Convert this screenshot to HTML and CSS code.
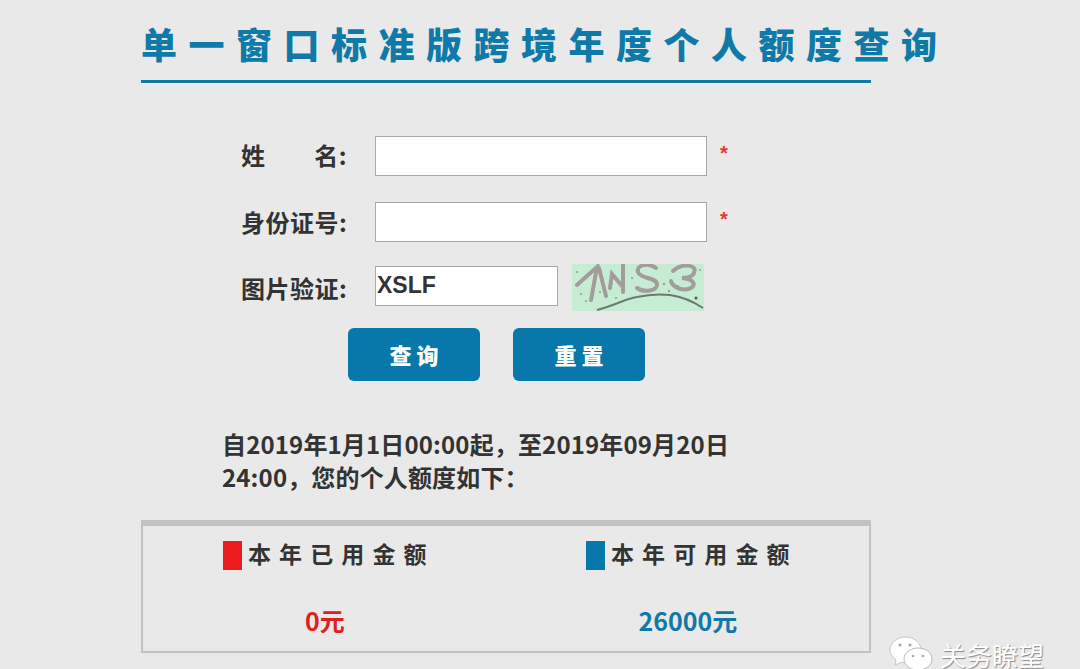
FILE: index.html
```html
<!DOCTYPE html>
<html lang="zh-CN">
<head>
  <meta charset="UTF-8">
  <title>单一窗口标准版跨境年度个人额度查询</title>
  <link rel="stylesheet" href="styles.css">
</head>
<body>
  <div class="page">
    <h1 class="title">单一窗口标准版跨境年度个人额度查询</h1>
    <div class="rule"></div>

    <form class="query-form">
      <div class="row">
        <label class="field-label spread">姓<span>名:</span></label>
        <input class="text-input" type="text">
        <span class="star">*</span>
      </div>
      <div class="row row-id">
        <label class="field-label">身份证号:</label>
        <input class="text-input" type="text">
        <span class="star">*</span>
      </div>
      <div class="row row-code">
        <label class="field-label code-label">图片验证:</label>
        <input class="text-input code-input" type="text" value="XSLF">
        <svg class="captcha" width="132" height="47" viewBox="0 0 132 47">
          <defs>
            <filter id="soft"><feGaussianBlur stdDeviation="0.6"/></filter>
          </defs>
          <rect width="132" height="47" fill="#c6ecd4"/>
          <g filter="url(#soft)">
            <g fill="none" stroke="#a29c9b" stroke-width="4" stroke-linecap="round">
              <path d="M5 21 L25 3 L19 36 M27 4 L34 32 M38 24 L40 10 L50 22 M51 1 L51 28"/>
              <path d="M84 4 C76 -2 64 1 66 8 C68 15 84 13 85 20 C86 27 72 29 65 24"/>
              <path d="M101 7 C110 -1 126 0 122 9 C120 14 112 14 110 14 C122 15 126 22 116 25 C108 27 100 22 99 17"/>
            </g>
            <path d="M25 46 C42 42 52 35 65 33 C78 30 88 30 98 31 C112 33 122 38 131 44" fill="none" stroke="#6c7a70" stroke-width="2"/>
            <g fill="#8aa596">
              <circle cx="9" cy="30" r="1.100"/><circle cx="14" cy="37" r="1.100"/><circle cx="28" cy="28" r="1"/>
              <circle cx="44" cy="34" r="1"/><circle cx="92" cy="20" r="1.200"/><circle cx="97" cy="27" r="1.200"/>
              <circle cx="106" cy="22" r="1"/><circle cx="5" cy="8" r="1"/><circle cx="128" cy="6" r="1"/>
              <circle cx="60" cy="14" r="1"/>
            </g>
            <circle cx="124" cy="34" r="1.500" fill="#4d5a52"/>
          </g>
        </svg>
      </div>
      <div class="actions">
        <button class="btn" type="button">查询</button>
        <button class="btn" type="reset">重置</button>
      </div>
    </form>

    <p class="notice">自2019年1月1日00:00起，至2019年09月20日<br>24:00，您的个人额度如下：</p>

    <div class="quota">
      <div class="quota-col">
        <div class="quota-head"><i class="mark mark-red"></i>本年已用金额</div>
        <div class="quota-value value-red">0元</div>
      </div>
      <div class="quota-col">
        <div class="quota-head"><i class="mark mark-blue"></i>本年可用金额</div>
        <div class="quota-value value-blue">26000元</div>
      </div>
    </div>
  </div>

  <!-- 水印 -->
  <div class="watermark">
    <svg width="44" height="32" viewBox="0 0 44 32">
      <path d="M16 0 C7 0 0 6 0 13 C0 17 3 20 6 23 L5 28 L12 25 C14 25.500 15 26 17 26 C24 26 31 20 31 13 C31 6 24 0 16 0 Z" fill="#fff" stroke="#bbb" stroke-width="0.8"/>
      <path d="M28 11 C20 11 14 16 14 22 C14 28 20 33 28 33 C36 33 42 28 42 22 C42 16 36 11 28 11 Z" fill="#fff" stroke="#aaa" stroke-width="0.8"/>
      <circle cx="10" cy="8" r="1.600" fill="#aaa"/>
      <circle cx="20" cy="8" r="1.600" fill="#aaa"/>
      <circle cx="23" cy="19" r="1.300" fill="#aaa"/>
      <circle cx="33" cy="19" r="1.300" fill="#aaa"/>
    </svg>
    <span class="watermark-name">关务瞭望</span>
  </div>
</body>
</html>
```

FILE: styles.css
```css
* {
  box-sizing: border-box;
}

html, body {
  height: 669px;
  overflow: hidden;
}

body {
  margin: 0;
  background: #e9e9e9;
  color: #333;
  font-family: "Liberation Sans", "Noto Sans CJK SC", sans-serif;
}

.page {
  width: 730px;
  margin-left: 141px;
}

.title {
  margin: 0;
  padding-top: 16px;
  height: 80px;
  font-family: "Noto Sans CJK SC", sans-serif;
  font-size: 36px;
  line-height: 54px;
  font-weight: 900;
  letter-spacing: 11.5px;
  white-space: nowrap;
  color: #0f79a8;
}

.rule {
  height: 3px;
  background: #0f79a8;
  box-shadow: 0 1px 0 #f6f6f0;
}

.query-form {
  padding: 53px 0 0 100px;
}

.row {
  display: flex;
  align-items: center;
  height: 40px;
  margin-bottom: 26px;
}

.row-id {
  margin-bottom: 24px;
}

.row-code {
  margin-bottom: 22px;
}

.field-label {
  width: 134px;
  font-family: "Noto Sans CJK SC", sans-serif;
  font-size: 24px;
  line-height: 34px;
  font-weight: 700;
  letter-spacing: 0.5px;
  color: #333;
}

.spread {
  display: flex;
  width: 134px;
  padding: 0 28px 3px 0;
  justify-content: space-between;
}

.code-label {
  padding-top: 4px;
}

.text-input {
  width: 332px;
  height: 40px;
  padding: 0 1px;
  border: 1px solid #a9a9a9;
  background: #fff;
  font-family: "Liberation Sans", sans-serif;
  font-size: 23px;
  font-weight: 700;
  color: #333;
  border-radius: 0;
  outline: none;
}

.star {
  margin: 0 0 6px 13px;
  font-size: 20px;
  font-weight: 700;
  color: #e5363a;
}

.code-input {
  width: 183px;
  padding-bottom: 2px;
}

.captcha {
  display: block;
  margin-left: 14px;
  margin-top: 3px;
}

.actions {
  display: flex;
  gap: 33px;
  padding-left: 107px;
}

.btn {
  width: 132px;
  height: 53px;
  border: 0;
  border-radius: 6px;
  background: #0877a9;
  color: #fff;
  font-family: "Noto Sans CJK SC", sans-serif;
  font-size: 22px;
  font-weight: 900;
  letter-spacing: 5px;
  padding: 0 0 2px 5px;
}

.notice {
  margin: 46px 0 0 81px;
  font-family: "Noto Sans CJK SC", sans-serif;
  font-size: 24px;
  line-height: 33px;
  font-weight: 700;
  letter-spacing: 0.15px;
  color: #333;
  white-space: nowrap;
}

.quota {
  display: flex;
  height: 133px;
  margin-top: 27px;
  border: 2px solid #c2c2c2;
  border-top-width: 6px;
}

.quota-col {
  width: 363px;
  padding: 15px 0 0 80px;
}

.quota-head {
  display: flex;
  align-items: flex-start;
  height: 29px;
  font-family: "Noto Sans CJK SC", sans-serif;
  font-size: 23px;
  line-height: 25px;
  font-weight: 700;
  letter-spacing: 8.100px;
  color: #333;
}

.mark {
  width: 19px;
  height: 29px;
  margin-right: 6px;
}

.mark-red {
  background: #ed1c1c;
}

.mark-blue {
  background: #0877a9;
}

.quota-value {
  width: 204px;
  margin-top: 32px;
  text-align: center;
  font-family: "Noto Sans CJK SC", sans-serif;
  font-size: 25px;
  line-height: 36px;
  font-weight: 700;
}

.value-red {
  color: #de2020;
}

.value-blue {
  color: #0f79a8;
}

.watermark {
  position: absolute;
  left: 890px;
  top: 637px;
  display: flex;
  gap: 6px;
  height: 32px;
  font-family: "Noto Sans CJK SC", sans-serif;
  font-size: 26px;
  color: #fff;
  text-shadow: 1px 1px 1px #8a8a8a;
  white-space: nowrap;
}

.watermark svg {
  overflow: visible;
}

.watermark-name {
  align-self: flex-end;
  line-height: 28px;
}
```
